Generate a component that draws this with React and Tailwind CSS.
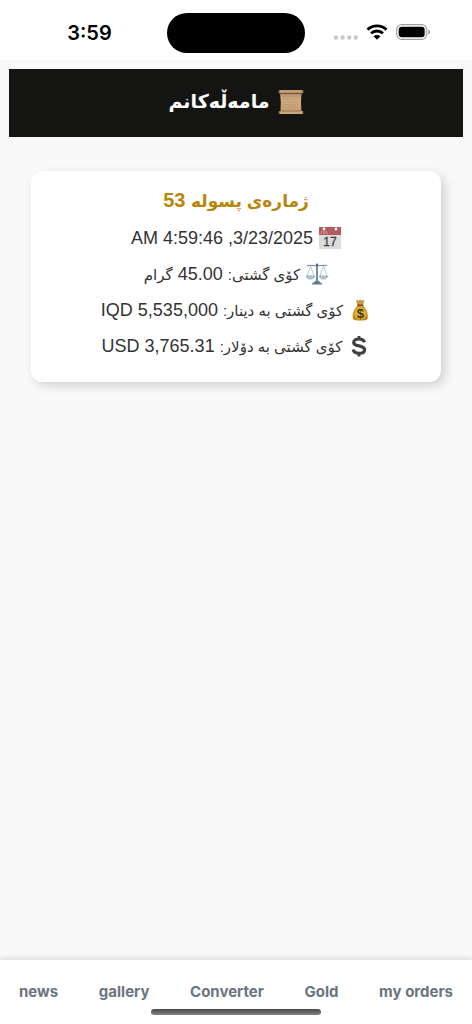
import React from "react";

const order = {
  number: 53,
  date: "3/23/2025, 4:59:46 AM",
  weight: "45.00",
  dinar: "5,535,000 IQD",
  dollar: "3,765.31 USD",
};

const links = ["news", "gallery", "Converter", "Gold", "my orders"];

function ScrollIcon() {
  return (
    <svg className="h-[26px] w-[26px]" viewBox="0 0 26 26" aria-hidden="true">
      <defs>
        <linearGradient id="paper" x1="0" y1="0" x2="0" y2="1">
          <stop offset="0" stopColor="#b08c66" />
          <stop offset="0.35" stopColor="#cfac82" />
          <stop offset="1" stopColor="#c29c72" />
        </linearGradient>
      </defs>
      <path d="M2 4h21.500l-.5 9 .5 10H2.500l.3-10z" fill="url(#paper)" />
      <path d="M5 8h15M5 10.500h15M5 13h15M5 15.500h15M5 18h13" stroke="#bd976c" strokeWidth=".6" />
      <rect x="1" y="1" width="24" height="3.400" rx="1" fill="#c49c72" />
      <path d="M1 4.400h23" stroke="#6b4b30" strokeWidth="1" />
      <rect x="1" y="22" width="24" height="3" rx="1" fill="#cda67a" />
      <path d="M2 22h21" stroke="#8c6744" strokeWidth=".8" />
      <path d="M1 1.500v2.500M25 1.500v2.500M1 22.500v2M25 22.500v2" stroke="#7a573a" strokeWidth="1" />
    </svg>
  );
}

function CalendarIcon() {
  return (
    <svg className="h-[22px] w-[22px]" viewBox="0 0 22 22" aria-hidden="true">
      <rect width="22" height="22" fill="#dcdcdc" />
      <rect width="22" height="8" fill="#b55a5e" />
      <circle cx="5" cy="2" r="1.400" fill="#fff" />
      <circle cx="17" cy="2" r="1.400" fill="#fff" />
      <path d="M2.500 4v2.500h-1M4.500 4v2.500h1.500V4M7.500 4v2.500h1.500" stroke="#dba5a5" strokeWidth=".7" fill="none" />
      <text x="11" y="19" textAnchor="middle" fontSize="12" fill="#3c3c3c" fontFamily="Liberation Sans, sans-serif" stroke="#3c3c3c" strokeWidth=".3">
        17
      </text>
    </svg>
  );
}

function ScalesIcon() {
  return (
    <svg className="h-[22px] w-[22px]" viewBox="0 0 22 22" fill="none" aria-hidden="true">
      <path d="M11 1v18" stroke="#657e92" strokeWidth="1.800" />
      <path d="M1 3c3-2 6 .4 10 0 4 .4 7-2 10 0" stroke="#73899b" strokeWidth="1.100" />
      <path d="M4.500 3L1 13M4.500 3L8 13M17.500 3L14 13M17.500 3L21 13" stroke="#a3adb5" strokeWidth=".7" />
      <path d="M.5 13h8c-.3 2.200-2 3-4 3s-3.700-.8-4-3zM13.500 13h8c-.3 2.200-2 3-4 3s-3.700-.8-4-3z" fill="#b7cfe0" stroke="#6f8798" strokeWidth=".6" />
      <path d="M9 18h4l1 1.500c1.500.3 2 .9 2.300 2H5.700c.3-1.100.8-1.700 2.300-2z" fill="#60798c" />
      <circle cx="11" cy="1.800" r="1.200" fill="#4d6679" />
    </svg>
  );
}

function MoneyBagIcon() {
  return (
    <svg className="h-[22px] w-[22px]" viewBox="0 0 22 22" aria-hidden="true">
      <defs>
        <radialGradient id="bag" cx=".5" cy=".5" r=".6">
          <stop offset="0" stopColor="#f2cf52" />
          <stop offset=".6" stopColor="#dcaa2a" />
          <stop offset="1" stopColor="#a87412" />
        </radialGradient>
      </defs>
      <path d="M7.500 1.500l2 .6L11.500 1l1.500 1 2-.5-1.600 4.700H9z" fill="#d0a136" stroke="#91661a" strokeWidth=".5" />
      <path d="M9 6.500h4.600c3.600 2.500 5.400 7 5.200 11.500-.1 2-1 3-3 3.200-3 .4-6 .4-9 0-2-.2-3-1.200-3.100-3.200C3.500 13.500 5.400 9 9 6.500z" fill="url(#bag)" />
      <path d="M8.600 6.300h5.300" stroke="#87521c" strokeWidth="1.400" strokeLinecap="round" />
      <text x="11.300" y="18.500" textAnchor="middle" fontSize="13" fontWeight="700" fill="#403514" fontFamily="Liberation Sans, sans-serif">
        $
      </text>
    </svg>
  );
}

function DollarIcon() {
  return (
    <svg className="h-[22px] w-[22px]" viewBox="0 0 22 22" fill="none" stroke="#404040" aria-hidden="true">
      <path d="M16.500 7.200C15.800 5 14 4 11 4 8 4 5.700 5.400 5.700 7.400c0 2.300 2.300 2.900 5.300 3.500 3 .7 5.600 1.300 5.600 3.800 0 2.200-2.300 3.600-5.600 3.600-3 0-5.400-1.200-5.800-3.800" strokeWidth="3.200" />
      <path d="M11 1v4M11 17v4.500" strokeWidth="2.800" />
    </svg>
  );
}

function StatusBar() {
  return (
    <div className="grid h-[60px] grid-cols-[1fr_138px_1fr] items-center bg-white pt-[5px]">
      <span className="pl-3 text-center font-[Inter,sans-serif] text-xl leading-6 font-semibold text-black">3:59</span>
      <div className="h-10 rounded-full bg-black" />
      <div className="flex items-center justify-center gap-2 pr-3 pb-0.5">
        <svg className="mt-3 h-[5px] w-6" viewBox="0 0 24 5" fill="#cacaca">
          <circle cx="2" cy="2.500" r="2.200" />
          <circle cx="8.600" cy="2.500" r="2.200" />
          <circle cx="15.200" cy="2.500" r="2.200" />
          <circle cx="21.800" cy="2.500" r="2.200" />
        </svg>
        <svg className="h-4 w-[22px]" viewBox="0 0 22 16" fill="none" stroke="#000">
          <path d="M1.500 5.600C7 .5 15 .5 20.500 5.600" strokeWidth="2.800" />
          <path d="M5 9.300c3.500-3.100 8.500-3.100 12 0" strokeWidth="2.800" />
          <path d="M11 15.700L7.500 12.300c2-1.700 5-1.700 7 0z" fill="#000" stroke="none" />
        </svg>
        <svg className="h-4 w-[35px]" viewBox="0 0 35 16">
          <rect x=".7" y=".7" width="30" height="14.600" rx="5" fill="none" stroke="#a0a0a0" strokeWidth="1.200" />
          <rect x="2.700" y="2.700" width="26" height="10.600" rx="3.300" fill="#000" />
          <path d="M32.300 5.500c2.200.8 2.200 4.200 0 5z" fill="#8f8f8f" />
        </svg>
      </div>
    </div>
  );
}

// Kurdish words are set smaller than the Latin digits beside them
function Kurdish({ children }) {
  return <span className="text-[15px]">{children}</span>;
}

function Row({ icon, children }) {
  return (
    <p className="flex h-6 items-center justify-center gap-[6px] whitespace-nowrap">
      {icon}
      <span>{children}</span>
    </p>
  );
}

export default function App() {
  return (
    <div className="flex min-h-screen flex-col bg-[#f9f9f9] font-['Liberation_Sans','DejaVu_Sans',sans-serif]">
      <StatusBar />

      <div dir="rtl" lang="ckb" className="flex-1 px-[9px] pt-[9px]">
        <header className="flex h-[68px] items-center justify-center gap-2 bg-[#141412] pb-[3px] text-white">
          <ScrollIcon />
          <h1 className="text-[19px] leading-8 font-bold">مامەڵەکانم</h1>
        </header>

        <main className="px-[22px] pt-[34px]">
          <section className="flex flex-col gap-3 rounded-xl bg-white px-4 pt-[15px] pb-6 text-lg leading-6 text-[#333] shadow-[4px_4px_11px_rgba(0,0,0,0.16)]">
            <h2 className="h-7 text-center text-xl leading-7 font-bold text-[#b8860b]">
              <span className="text-[17px]">ژمارەی پسولە</span> {order.number}
            </h2>
            <Row icon={<CalendarIcon />}>{order.date}</Row>
            <Row icon={<ScalesIcon />}>
              <Kurdish>کۆی گشتی:</Kurdish> {order.weight} <Kurdish>گرام</Kurdish>
            </Row>
            <Row icon={<MoneyBagIcon />}>
              <Kurdish>کۆی گشتی بە دینار:</Kurdish> {order.dinar}
            </Row>
            <Row icon={<DollarIcon />}>
              <Kurdish>کۆی گشتی بە دۆلار:</Kurdish> {order.dollar}
            </Row>
          </section>
        </main>
      </div>

      <nav className="relative flex h-16 items-center justify-between bg-white px-[19px] font-[Inter,sans-serif] text-[15px] leading-6 font-bold text-[#6c757d] shadow-[0_-2px_6px_rgba(0,0,0,0.12)]">
        {links.map((link) => (
          <a key={link} href="#" className="whitespace-nowrap">
            {link}
          </a>
        ))}
        <div className="absolute bottom-[9px] left-1/2 h-[6px] w-[170px] -translate-x-1/2 rounded-full bg-linear-to-b from-[#484848] to-[#858585]" />
      </nav>
    </div>
  );
}
